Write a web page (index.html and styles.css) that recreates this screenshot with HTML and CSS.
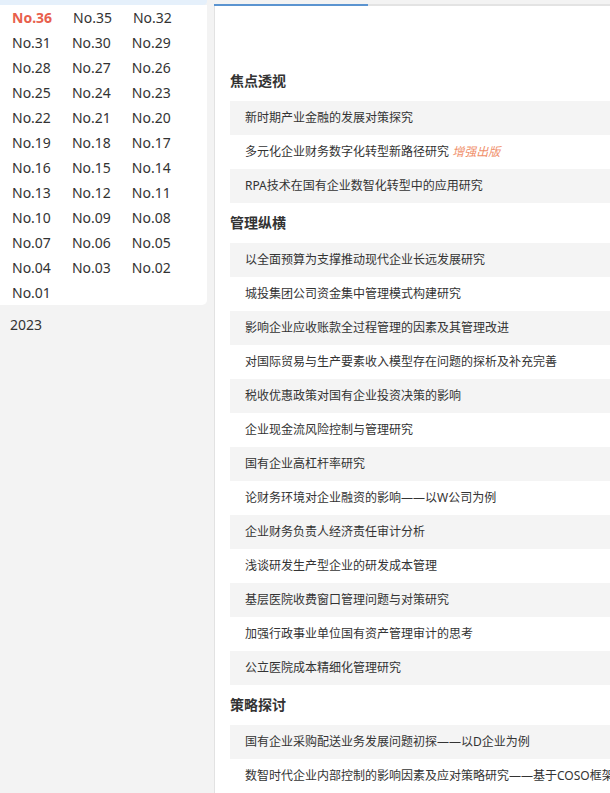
FILE: index.html
```html
<!DOCTYPE html>
<html>
<head>
    <meta charset="utf-8">
    <title>期刊目录</title>
    <link rel="stylesheet" href="styles.css">
</head>
<body>

    <div class="page">
        <!-- years and issues -->
        <aside class="side">
            <div class="year-open"></div>
            <div class="issues">
                <a class="issue on">No.36</a>
                <a class="issue">No.35</a>
                <a class="issue">No.32</a>
                <a class="issue">No.31</a>
                <a class="issue">No.30</a>
                <a class="issue">No.29</a>
                <a class="issue">No.28</a>
                <a class="issue">No.27</a>
                <a class="issue">No.26</a>
                <a class="issue">No.25</a>
                <a class="issue">No.24</a>
                <a class="issue">No.23</a>
                <a class="issue">No.22</a>
                <a class="issue">No.21</a>
                <a class="issue">No.20</a>
                <a class="issue">No.19</a>
                <a class="issue">No.18</a>
                <a class="issue">No.17</a>
                <a class="issue">No.16</a>
                <a class="issue">No.15</a>
                <a class="issue">No.14</a>
                <a class="issue">No.13</a>
                <a class="issue">No.12</a>
                <a class="issue">No.11</a>
                <a class="issue">No.10</a>
                <a class="issue">No.09</a>
                <a class="issue">No.08</a>
                <a class="issue">No.07</a>
                <a class="issue">No.06</a>
                <a class="issue">No.05</a>
                <a class="issue">No.04</a>
                <a class="issue">No.03</a>
                <a class="issue">No.02</a>
                <a class="issue">No.01</a>
            </div>
            <div class="year">2023</div>
        </aside>

        <!-- table of contents -->
        <main class="content">
            <div class="tabbar"><span class="tab-on"></span></div>
            <div class="toc">
                <h3 class="column">焦点透视</h3>
                <ul class="list">
                    <li>新时期产业金融的发展对策探究</li>
                    <li>多元化企业财务数字化转型新路径研究 <em class="plus">增强出版</em></li>
                    <li>RPA技术在国有企业数智化转型中的应用研究</li>
                </ul>

                <h3 class="column">管理纵横</h3>
                <ul class="list">
                    <li>以全面预算为支撑推动现代企业长远发展研究</li>
                    <li>城投集团公司资金集中管理模式构建研究</li>
                    <li>影响企业应收账款全过程管理的因素及其管理改进</li>
                    <li>对国际贸易与生产要素收入模型存在问题的探析及补充完善</li>
                    <li>税收优惠政策对国有企业投资决策的影响</li>
                    <li>企业现金流风险控制与管理研究</li>
                    <li>国有企业高杠杆率研究</li>
                    <li>论财务环境对企业融资的影响——以W公司为例</li>
                    <li>企业财务负责人经济责任审计分析</li>
                    <li>浅谈研发生产型企业的研发成本管理</li>
                    <li>基层医院收费窗口管理问题与对策研究</li>
                    <li>加强行政事业单位国有资产管理审计的思考</li>
                    <li>公立医院成本精细化管理研究</li>
                </ul>

                <h3 class="column">策略探讨</h3>
                <ul class="list">
                    <li>国有企业采购配送业务发展问题初探——以D企业为例</li>
                    <li>数智时代企业内部控制的影响因素及应对策略研究——基于COSO框架</li>
                </ul>
            </div>
        </main>
    </div>

</body>
</html>
```

FILE: styles.css
```css
/* page */
body {
    margin: 0;
    background: #f3f3f3;
    font-family: "Noto Sans", "Noto Sans CJK SC", sans-serif;
    color: #333;
    overflow: hidden;
}

.page {
    display: flex;
    height: 100vh;
}

/* left column */
.side {
    width: 207px;
    flex-shrink: 0;
    margin-right: 7px;
}

.year-open {
    height: 5px;
    background: #e5f0fb;
    border-bottom-right-radius: 4px;
}

.issues {
    display: flex;
    flex-wrap: wrap;
    padding-left: 12px;
    background: #fff;
    border-bottom-right-radius: 5px;
}

.issue {
    margin-right: 21px;
    font-size: 14px;
    line-height: 25px;
    color: #333;
}

.issue.on {
    color: #e8604c;
    font-weight: bold;
}

.year {
    padding-left: 10px;
    font-size: 14px;
    line-height: 40px;
}

/* right column */
.content {
    flex: 1;
    min-width: 0;
    display: flex;
    flex-direction: column;
    padding-top: 4px;
}

.tabbar {
    display: flex;
    flex-shrink: 0;
    height: 2px;
    background: #e3e3e3;
}

.tab-on {
    width: 154px;
    background: #5b94d0;
}

.toc {
    flex: 1;
    min-height: 0;
    overflow: hidden;
    padding: 55px 0 0 15px;
    background: #fff;
    border-left: 1px solid #e2e2e2;
}

.column {
    margin: 0;
    font-size: 14px;
    line-height: 40px;
    color: #333;
}

.list {
    margin: 0;
    padding: 0;
    list-style: none;
}

.list li {
    height: 34px;
    padding-left: 15px;
    font-size: 12px;
    line-height: 34px;
    white-space: nowrap;
    overflow: hidden;
}

.list li:nth-child(odd) {
    background: #f4f4f4;
}

.plus {
    color: #f0906c;
}
```
